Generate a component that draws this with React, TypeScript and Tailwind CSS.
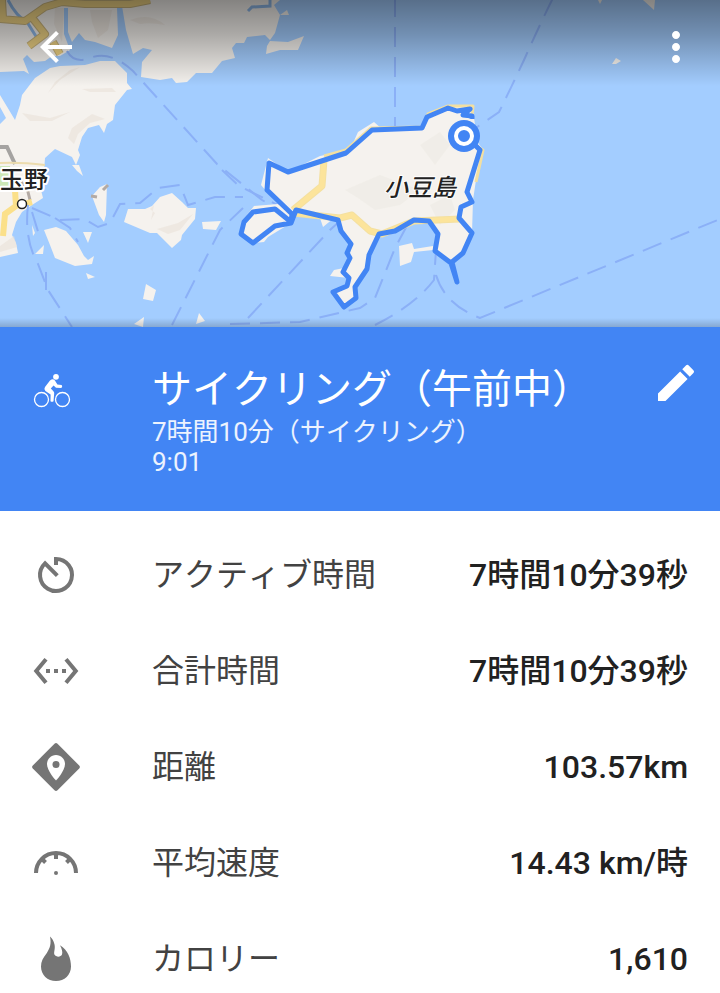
import type { ReactNode } from "react";
import { MdArrowBack, MdMoreVert, MdEdit, MdSettingsEthernet } from "react-icons/md";

const LAND = "#f5f2ee";

function RouteMap() {
  return (
    <svg viewBox="0 0 720 327" className="block h-auto w-full" role="img" aria-label="小豆島">
      <defs>
        <linearGradient id="top-shade" x1="0" y1="0" x2="0" y2="1">
          <stop offset="0" stopColor="#000" stopOpacity="0.46" />
          <stop offset="0.4" stopColor="#000" stopOpacity="0.3" />
          <stop offset="1" stopColor="#000" stopOpacity="0" />
        </linearGradient>
        <linearGradient id="bottom-shade" x1="0" y1="0" x2="0" y2="1">
          <stop offset="0" stopColor="#000" stopOpacity="0" />
          <stop offset="1" stopColor="#000" stopOpacity="0.18" />
        </linearGradient>
      </defs>
      <rect width="720" height="327" fill="#a3cdff" />

      {/* mainland */}
      <g fill={LAND}>
        <path d="M0 0H280L274 5 280 15 275 33 270 40 265 35 247 37 244 43 236 43 232 48 235 58 222 61 212 73 196 73 187 82 176 83 172 78 160 80 141 77 142 62 152 50 143 48 133 54 126 30 122 6 117 8 118 35 112 48 95 42 85 40 79 33 72 42 68 32 68 8 64 8 64 34 70 50 60 56 52 56 45 61 34 62 27 55 23 59 29 74 24 71 0 72Z" />
        <path d="M0 95 15 120 20 105 22 95 35 78 50 68 60 66 85 65 100 61 115 61 127 73 127 83 132 89 127 90 115 105 113 120 107 124 104 133 99 125 88 128 82 137 78 150 80 155 76 165 72 157 55 149 45 158 44 172 47 180 41 190 43 198 32 205 22 212 16 222 12 235 16 243 18 253 0 257V124L6 118 0 107Z" />
        <path d="M280 15 287 10 289 15ZM267 46 270 41 288 42 304 36 298 50 280 50 266 54ZM612 64 616 58 621 61 616 64ZM598 0H602L600 4ZM643 0H655L654 10Z" />
        <path d="M72 165 79 165 83 176 77 171ZM92 196 100 187 107 184 106 215 104 222 99 215ZM128 209 145 209 152 206 160 197 172 193 182 202 188 208 196 208 195 219 182 235 181 240 172 248 157 233 150 233 124 222ZM202 222 221 221 216 230 203 229ZM44 230 56 227 66 231 78 245 84 256 88 260 94 256 92 264 75 266 55 258 50 245ZM83 232 92 232 88 243ZM32 225 35 233 33 236ZM35 254 44 245 43 254ZM86 273 95 277 88 279ZM143 299 146 284 156 290 153 301ZM134 324 144 317 143 327ZM196 324 199 313 205 321Z" />
      </g>
      <g fill="#e9e1d8" opacity="0.6">
        <path d="M55 82 70 70 80 67 60 80 48 93ZM22 113 50 118 70 112 52 121 30 121ZM72 128 92 114 105 119 90 123 78 134 74 144 68 138ZM130 20Q150 12 165 25 150 22 140 24ZM90 10 112 10 108 30 98 38 92 22ZM55 8 64 8 62 42 54 24ZM157 229 178 223 193 214 180 230 168 234ZM150 209 155 213 151 220 154 205ZM0 246 14 236 17 247 0 252ZM82 89 112 88 116 92 90 92Z" />
      </g>
      <path d="M0 166 10 166 12 186 0 188Z" fill="#cde8b6" />
      <path d="M97 197 91 196M103 190 108 185M21 182 27 188 30 200" fill="none" stroke="#b3aaa4" strokeWidth="3" />
      <path d="M8 0Q16 16 27 22L37 38M248 11 252 7 270 6V0" fill="none" stroke="#8eb8e8" strokeWidth="3" />
      <g fill="none" strokeLinejoin="round">
        <path d="M0 19 25 21 45 7 62 2 85 4 130 4 150 0M2 0 3 18M30 15 45 34 29 46M53 42 60 54" stroke="#c9b47c" strokeWidth="8" />
        <path d="M0 19 25 21 45 7 62 2 85 4 130 4 150 0M2 0 3 18M30 15 45 34 29 46M53 42 60 54" stroke="#eed283" strokeWidth="6" />
      </g>
      <path d="M15 190 16 206 5 214 3 236M18 206 32 202" fill="none" stroke="#fbe08a" strokeWidth="6" />
      <path d="M0 147 7 147 15 164" fill="none" stroke="#a5a3a1" strokeWidth="4" />
      <path d="M0 163Q20 162 45 165" fill="none" stroke="#ecdcae" strokeWidth="2" />

      {/* ferry lines */}
      <g fill="none" stroke="#8bb0f7" strokeWidth="2" strokeDasharray="20 10">
        <path d="M395 -3V130" />
        <path d="M553 -2Q540 24 524 60 510 90 499 112L470 132" />
        <path d="M67 51Q74 64 90 58 110 50 133 71 150 90 217 164L262 200 290 216" />
        <path d="M28 205Q24 240 38 264L48 290 72 327" />
        <path d="M32 208 60 220 84 219 98 227 110 223 120 204 140 203 158 188 180 185 188 205 215 197 243 197" />
        <path d="M32 212 40 238M46 290 46 272M55 218 70 228 78 242" />
        <path d="M172 325 220 230 243 208M222 170 239 186 288 210" />
        <path d="M248 318 330 230 350 212" />
        <path d="M230 324 300 322 360 308 375 298 395 248 410 220" />
        <path d="M375 325Q415 305 434 280L436 250M436 275Q445 305 480 318L720 219" />
      </g>

      {/* Shodoshima */}
      <path d="M448 106 470 105 474 118 478 143 482 148 476 180 473 200 472 233 464 254 452 263 434 251 438 234 429 221 414 220 395 233 379 236 368 256 366 270 355 287 356 299 344 307 333 292 348 284 349 278 330 276 334 270 344 268 350 258 351 244 340 229 334 218 323 227 320 218 296 211 291 223 268 237 264 242 253 243 240 233 243 220 254 206 278 204 286 209 267 192 261 185 268 158 288 172 320 156 350 150 358 132 374 122 382 129 422 127 428 115Z" fill={LAND} />
      <path d="M399 246 412 243 414 249 433 246 433 250 414 252 411 262 400 266Z" fill={LAND} />
      <path d="M345 190 380 175 420 190 400 205 375 210 358 198ZM420 145 440 132 450 145 435 165ZM430 205 450 195 455 210 440 225Z" fill="#e9e4de" opacity="0.35" />
      <g fill="none" strokeLinejoin="round">
        <path d="M324 160 322 186 293 210M293 213 340 218 352 215 370 231 382 234 414 221 460 219" stroke="#f4e0a0" strokeWidth="7" />
        <path d="M324 160 322 186 293 210M293 213 340 218 352 215 370 231 382 234 414 221 460 219" stroke="#fce49b" strokeWidth="5" />
        <path d="M324 156 346 150 371 128 422 127 428 114 448 106 473 106 472 116M476 146 483 150 476 182" stroke="#f3dfa0" strokeWidth="3" />
      </g>
      <path
        d="M472 119 472 116 463 115 470 109 457 111 448 108 427 117 422 128 372 130 346 153 288 172 269 163 267 190 292 214 291 222 275 209 253 212 244 222 241 234 253 243 275 226 291 223 296 210 338 220 341 231 351 244 347 253 350 258 343 272 349 278 347 286 333 292 344 307 356 298 355 287 367 269 369 255 379 234 395 231 414 220 429 221 438 234 435 251 451 263 457 282 452 262 463 253 472 233 459 218 461 207 472 202 467 192 480 150 475 145"
        fill="none"
        stroke="#4285f4"
        strokeWidth="5"
        strokeLinejoin="round"
      />
      <circle cx="464" cy="136" r="16" fill="#4285f4" />
      <circle cx="464" cy="136" r="8" fill="#4285f4" stroke="#fff" strokeWidth="4" />

      <g fill="#222" stroke="#fff" paintOrder="stroke" strokeLinejoin="round" className="font-['Noto_Sans_CJK_JP',sans-serif] font-medium">
        <text x="0" y="188" fontSize="24" strokeWidth="4">玉野</text>
        <text x="384" y="196" fontSize="24" strokeWidth="2" fontStyle="italic">小豆島</text>
      </g>
      <circle cx="22" cy="204" r="4.500" fill="#fff" stroke="#222" strokeWidth="1.500" />

      <rect width="720" height="86" fill="url(#top-shade)" />
      <rect y="318" width="720" height="9" fill="url(#bottom-shade)" />
    </svg>
  );
}

function CyclistIcon() {
  return (
    <svg viewBox="0 0 48 48" className="size-12 shrink-0" fill="none" stroke="#fff" aria-hidden="true">
      <circle cx="9.5" cy="32.5" r="7" strokeWidth="1.3" />
      <circle cx="30.5" cy="32.5" r="7" strokeWidth="1.3" />
      <circle cx="24" cy="9.8" r="2.9" fill="#fff" stroke="none" />
      <path d="M19.500 12.400Q21.500 11.800 22.900 13.600L25.400 17.600 29.600 18Q31 19.300 29.400 20.900L24 20.700 21.600 18.600 18.800 21.600 21.200 24Q22.400 25 22.200 26.500L21.500 34.200Q20 35.200 18.500 34.200L18.600 27.400 13.400 23.900Q11.600 22.100 13 20.100L18 13.600Z" fill="#fff" stroke="none" />
    </svg>
  );
}

function TimerIcon() {
  return (
    <svg viewBox="0 0 48 48" className="size-12" fill="none" stroke="currentColor" strokeWidth="4" aria-hidden="true">
      <path d="M24 14V8A16 16 0 1 1 13 12.400L25.300 24.700" />
    </svg>
  );
}

function DistanceIcon() {
  return (
    <svg viewBox="0 0 48 48" className="size-12" fill="currentColor" aria-hidden="true">
      <path d="M22.500.8Q24-.6 25.500.8L47.200 22.500Q48.600 24 47.200 25.500L25.500 47.200Q24 48.600 22.500 47.200L.8 25.500Q-.6 24 .8 22.500Z" />
      <path d="M24 12C19 12 15 16 15 21 15 28 24 37.500 24 37.500S33 28 33 21C33 16 29 12 24 12Z" fill="#fff" />
      <circle cx="24" cy="21.500" r="3.500" />
    </svg>
  );
}

function SpeedIcon() {
  return (
    <svg viewBox="0 0 48 48" className="size-12" fill="none" stroke="currentColor" strokeWidth="4" aria-hidden="true">
      <path d="M4 34A20 20 0 0 1 44 34M24 14V20M10 20 13.500 23.500M38 20 34.500 23.500" />
      <circle cx="24" cy="34" r="2" fill="currentColor" stroke="none" />
    </svg>
  );
}

function FlameIcon() {
  return (
    <svg viewBox="0 0 48 48" className="size-12" fill="currentColor" aria-hidden="true">
      <path d="M18 1.500C19.500 9 18 13 14.500 18.500 11 23 9 26.500 9 31.500 9 40 15.500 46 24 46S39 40 39 31.500C39 23 36 15.500 28 10.200 30 14 30.800 17 30 19.500 28.500 22.500 24 22.200 22.400 19.500 21.500 17 23.500 14 22.500 9.500 21.800 6 20 3 18 1.500Z" />
    </svg>
  );
}

const stats: { label: string; value: string; icon: ReactNode }[] = [
  { label: "アクティブ時間", value: "7時間10分39秒", icon: <TimerIcon /> },
  { label: "合計時間", value: "7時間10分39秒", icon: <MdSettingsEthernet className="size-12" /> },
  { label: "距離", value: "103.57km", icon: <DistanceIcon /> },
  { label: "平均速度", value: "14.43 km/時", icon: <SpeedIcon /> },
  { label: "カロリー", value: "1,610", icon: <FlameIcon /> },
];

export default function App() {
  return (
    <div className="h-screen overflow-x-hidden overflow-y-auto bg-white font-[Roboto,'Noto_Sans_CJK_JP',sans-serif] [font-kerning:none] [scrollbar-width:none]">
      <header className="relative">
        <RouteMap />
        <nav className="absolute inset-x-0 top-0 flex items-center justify-between py-[23px] pr-5 pl-8 text-white">
          <button type="button" aria-label="戻る">
            <MdArrowBack className="size-12" />
          </button>
          <button type="button" aria-label="その他">
            <MdMoreVert className="size-12" />
          </button>
        </nav>
      </header>

      <section className="flex items-start bg-[#4285f4] pt-8 pr-5 pb-[34px] pl-8 text-white">
        <div className="flex w-[120px] shrink-0 pt-2">
          <CyclistIcon />
        </div>
        <div className="min-w-0 flex-1 pt-1">
          <h1 className="text-[40px] leading-[54px]">サイクリング（午前中）</h1>
          <p className="text-[26px] leading-[30px] text-white/90">7時間10分（サイクリング）</p>
          <p className="text-[26px] leading-[30px] text-white/90">9:01</p>
        </div>
        <button type="button" aria-label="編集">
          <MdEdit className="size-12" />
        </button>
      </section>

      <dl className="pt-4">
        {stats.map((s) => (
          <div key={s.label} className="flex h-24 items-center px-8 text-[32px] leading-[48px]">
            <dt className="flex flex-1 items-center text-[#424242]">
              <span className="w-[120px] shrink-0 text-[#757575]">{s.icon}</span>
              {s.label}
            </dt>
            <dd className="font-medium text-[#212121]">{s.value}</dd>
          </div>
        ))}
      </dl>
    </div>
  );
}
